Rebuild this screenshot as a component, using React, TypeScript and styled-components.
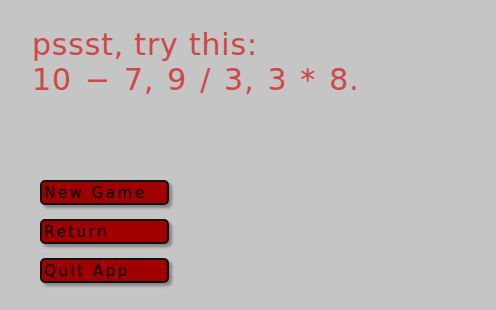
import styled, { createGlobalStyle } from "styled-components";

const GlobalStyle = createGlobalStyle`
  html, body {
    margin: 0;
    padding: 0;
    background: #c5c5c5;
  }
`;

const Screen = styled.div`
  width: 496px;
  height: 310px;
  background: #c5c5c5;
  display: flex;
  flex-direction: column;
  padding: 27px 0 0 32px;
  box-sizing: border-box;
  font-family: "DejaVu Sans", sans-serif;
`;

const HintLine = styled.div<{ $wide?: boolean }>`
  color: #cf4848;
  font-size: 30px;
  line-height: 35px;
  letter-spacing: ${(p) => (p.$wide ? "1px" : "0.8px")};
  word-spacing: ${(p) => (p.$wide ? "2.25px" : "0")};
  white-space: nowrap;
`;

const Menu = styled.div`
  display: flex;
  flex-direction: column;
  gap: 14px;
  margin-top: 83px;
  margin-left: 8px;
`;

const MenuButton = styled.button`
  width: 129px;
  height: 25px;
  box-sizing: border-box;
  background: #a00000;
  border: 2px solid #111;
  border-radius: 5px;
  box-shadow: 3px 3px 3px rgba(90, 90, 90, 0.6);
  padding: 0 0 0 2px;
  text-align: left;
  color: #000;
  font-family: "DejaVu Sans", sans-serif;
  font-size: 15px;
  letter-spacing: 2.5px;
  line-height: 20px;
  cursor: pointer;
`;

const App = () => {
  return (
    <>
      <GlobalStyle />
      <Screen>
        <HintLine>pssst, try this:</HintLine>
        <HintLine $wide>10 − 7, 9 / 3, 3 * 8.</HintLine>
        <Menu>
          <MenuButton>New Game</MenuButton>
          <MenuButton>Return</MenuButton>
          <MenuButton>Quit App</MenuButton>
        </Menu>
      </Screen>
    </>
  );
};

export default App;
